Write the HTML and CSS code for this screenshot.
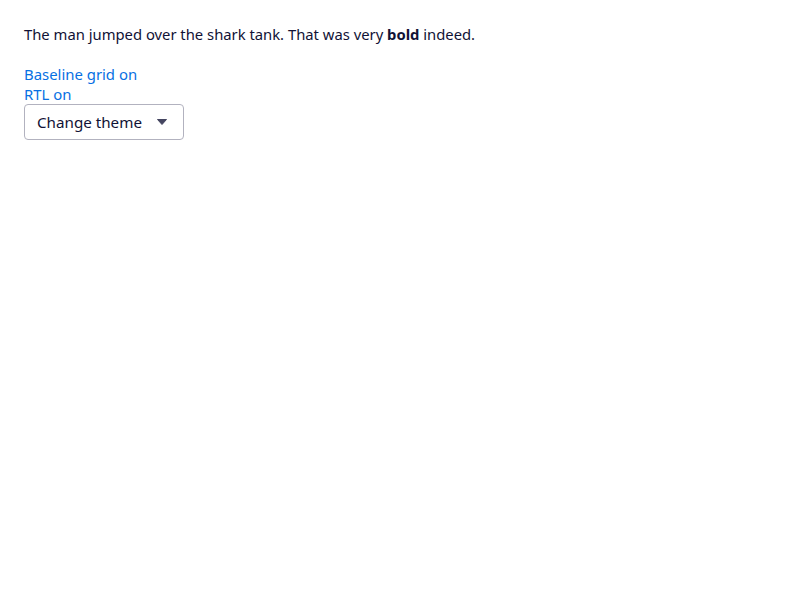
FILE: index.html
```html
<!DOCTYPE html>
<html>
<head>
<meta charset="utf-8">
<link rel="stylesheet" href="styles.css">
</head>
<body>
<div class="page">
  <p class="para">The man jumped over the shark tank. That was very <strong>bold</strong> indeed.</p>
  <div class="controls">
    <a class="link" href="#">Baseline grid on</a>
    <a class="link" href="#">RTL on</a>
    <button class="select">
      <span>Change theme</span>
      <svg class="caret" width="10" height="6" viewBox="0 0 10 6"><path d="M0.5 0.5h9L5 5.5z" fill="#444560" stroke="#444560" stroke-linejoin="round"/></svg>
    </button>
  </div>
</div>
</body>
</html>
```

FILE: styles.css
```css
html, body {
  margin: 0;
  padding: 0;
  background: #fff;
}
body {
  font-family: "Noto Sans", "Open Sans", sans-serif;
  color: #111236;
  font-size: 14.8px;
}
.page {
  padding: 24px;
}
.para {
  margin: 0 0 20px 0;
  font-size: 14.8px;
  line-height: 20px;
}
.para strong {
  font-weight: 700;
}
.controls {
  display: flex;
  flex-direction: column;
  align-items: flex-start;
}
.link {
  color: #0770e3;
  text-decoration: none;
  font-size: 14.9px;
  line-height: 20px;
}
.select {
  margin-top: 0;
  width: 160px;
  height: 36px;
  border: 1px solid #b2b2bf;
  border-radius: 4px;
  background: #fff;
  display: flex;
  align-items: center;
  justify-content: space-between;
  padding: 0 16px 0 12px;
  font-family: inherit;
  font-size: 15.2px;
  color: #111236;
}
.caret {
  display: block;
}
```
